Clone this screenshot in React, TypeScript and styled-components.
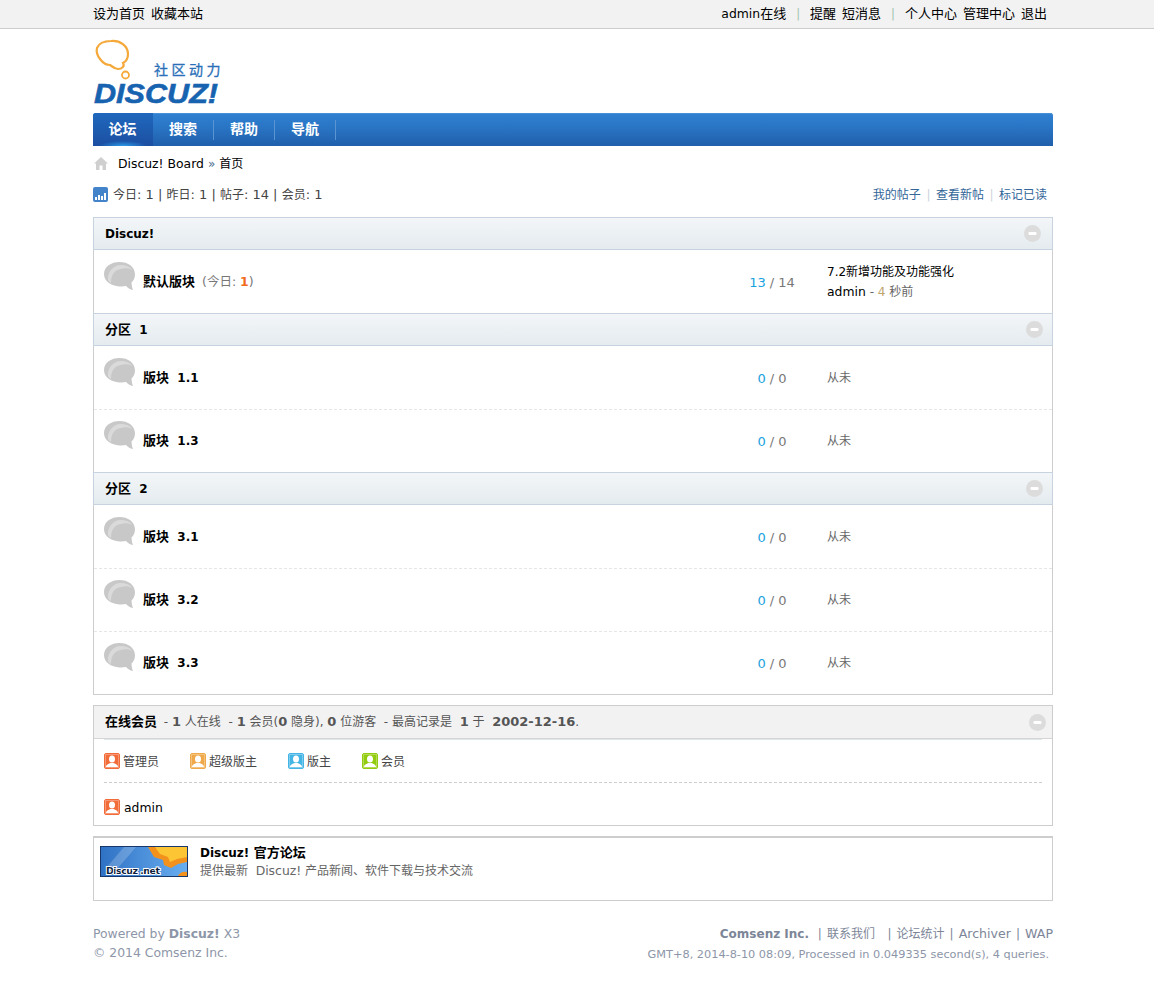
import styled, { createGlobalStyle } from 'styled-components';

const GlobalStyle = createGlobalStyle`
  html, body {
    margin: 0;
    padding: 0;
    background: #fff;
  }
  body {
    font: 12px/20px "DejaVu Sans", "Noto Sans CJK SC", sans-serif;
    color: #444;
  }
`;

// latin runs sit a bit larger than the cjk around them
const Lat = styled.span<{ $size?: number }>`
  font-size: ${(p) => p.$size ?? 12.4}px;
`;

const Container = styled.div`
  width: 960px;
  margin-left: 93px;
`;

const TopBar = styled.div`
  height: 28px;
  background: #f2f2f2;
  border-bottom: 1px solid #cdcdcd;
`;

const TopInner = styled(Container)`
  display: flex;
  justify-content: space-between;
  font-size: 13px;
  line-height: 28px;
  color: #000;
`;

const TopLinks = styled.div`
  display: flex;
  gap: 6px;
`;

const TopRight = styled(TopLinks)`
  padding-right: 6px;
`;

const Pipe = styled.span`
  color: #a9c9b5;
  margin: 0 3.75px;
`;

const LogoWrap = styled.div`
  height: 75px;
  padding-top: 9px;
  svg {
    display: block;
    overflow: visible;
  }
`;

const Nav = styled.div`
  display: flex;
  height: 33px;
  border-radius: 3px 3px 0 0;
  background: linear-gradient(#3080d2, #2a76c6 40%, #205fab);
  box-shadow: inset 0 1px 0 #4a90d8;
`;

const NavItem = styled.div<{ $active?: boolean }>`
  position: relative;
  box-sizing: border-box;
  width: 61px;
  padding-right: 1px;
  text-align: center;
  font-size: 14px;
  font-weight: bold;
  line-height: 33px;
  color: #fff;
  ${(p) =>
    p.$active
      ? `
    width: 60px;
    border-radius: 3px 0 0 0;
    background: radial-gradient(ellipse 24px 5px at 50% 100%, #2b9ae8, transparent), linear-gradient(#1f68bd, #1c4fa2);
  `
      : `
    &::after {
      content: '';
      position: absolute;
      right: 0;
      top: 7px;
      height: 20px;
      width: 1px;
      background: #5a94d2;
    }
  `}
`;

const Crumb = styled.div`
  display: flex;
  align-items: center;
  box-sizing: border-box;
  height: 34px;
  padding-top: 2px;
  color: #000;
  svg {
    margin: -2px 10px 0 1px;
  }
`;

const CrumbSep = styled.span`
  color: #4a6a8c;
  margin: 0 4px;
`;

const Stats = styled.div`
  display: flex;
  justify-content: space-between;
  align-items: center;
  height: 20px;
  margin: 4px 0 13px;
`;

const StatsLeft = styled.div`
  display: flex;
  align-items: center;
  gap: 5px;
`;

const StatsText = styled.span`
  padding-top: 2px;
`;

const StatsRight = styled.div`
  display: flex;
  padding: 2px 6px 0 0;
  color: #336699;
`;

const StatSep = styled.span`
  color: #cdd5dc;
  margin: 0 5.5px;
`;

const ForumBox = styled.div`
  border: 1px solid #cdcdcd;
  border-top: 0;
`;

const CatHeader = styled.div<{ $first?: boolean }>`
  display: flex;
  justify-content: space-between;
  align-items: center;
  box-sizing: border-box;
  height: 33px;
  margin: 0 -1px;
  padding: 0 ${(p) => (p.$first ? 11 : 9)}px 0 11px;
  border: 1px solid #c7d4df;
  background: linear-gradient(#f3f6f8, #e4ebef);
  font-size: 13px;
  font-weight: bold;
  color: #000;
`;

const ForumRow = styled.div<{ $first?: boolean }>`
  display: grid;
  grid-template-columns: 623px 110px 1fr;
  align-items: center;
  box-sizing: border-box;
  height: 63px;
  ${(p) => (p.$first ? '' : 'border-top: 1px dashed #e6e6e6; padding-bottom: 1px;')}
`;

const ForumTitle = styled.div`
  display: flex;
  align-items: center;
  padding-left: 10px;
  svg {
    margin: -4px 7px 4px 0;
  }
`;

const ForumName = styled.span`
  font-size: 13px;
  font-weight: bold;
  color: #000;
`;

const Today = styled.span`
  margin-left: 7px;
  font-size: 12.5px;
  color: #777;
  b {
    color: #f26c1d;
  }
`;

const Counts = styled.div`
  padding-top: 2px;
  text-align: center;
  font-size: 13px;
  color: #777;
  span {
    color: #19a2de;
  }
`;

const LastPost = styled.div`
  padding-top: 2px;
  color: #666;
  line-height: 19px;
`;

const LastTitle = styled.div`
  color: #000;
`;

const LastMeta = styled.div`
  color: #666;
  em {
    font-style: normal;
    color: #c0a46e;
  }
  span {
    color: #000;
  }
`;

const OnlineBox = styled.div`
  margin-top: 10px;
  border: 1px solid #cdcdcd;
`;

const OnlineHead = styled.div`
  display: flex;
  justify-content: space-between;
  align-items: center;
  height: 32px;
  padding: 0 6px 0 11px;
  background: #f2f2f2;
  border-bottom: 1px solid #d5d5d5;
  color: #555;
  b {
    font-size: 13px;
    color: #555;
  }
`;

const OnlineTitle = styled.b`
  && {
    color: #000;
  }
  margin-right: 3px;
`;

const Legend = styled.div`
  display: flex;
  align-items: center;
  box-sizing: border-box;
  height: 44px;
  margin: 0 10px;
  border-top: 1px solid #dde7ec;
  border-bottom: 1px dashed #cdcdcd;
`;

const LegendItem = styled.div<{ $gap: number }>`
  display: flex;
  align-items: center;
  gap: 3px;
  margin-right: ${(p) => p.$gap}px;
`;

const ItemLabel = styled.span`
  padding-top: 2px;
`;

const OnlineUsers = styled.div`
  display: flex;
  align-items: center;
  gap: 4px;
  box-sizing: border-box;
  height: 42px;
  margin: 0 10px;
  padding-top: 6px;
  color: #000;
`;

const LinkBox = styled.div`
  display: flex;
  box-sizing: border-box;
  height: 65px;
  margin-top: 10px;
  padding: 8px 6px;
  border: 1px solid #cdcdcd;
  border-top-width: 2px;
  svg {
    flex: none;
  }
`;

const LinkText = styled.div`
  margin: -2px 0 0 12px;
  line-height: 17px;
  color: #666;
`;

const LinkTitle = styled.div`
  font-size: 13px;
  font-weight: bold;
  color: #000;
`;

const Footer = styled.div`
  display: flex;
  justify-content: space-between;
  margin-top: 23px;
  font-size: 12.4px;
  color: #8d96a8;
  line-height: 19px;
`;

const FooterRight = styled.div`
  text-align: right;
`;

const FooterLinks = styled.div`
  font-size: 12px;
  color: #7d8698;
  b {
    color: #7d8698;
  }
`;

const FooterSep = styled.span`
  margin: 0 5px;
`;

const Perf = styled.div`
  margin-top: 1px;
  padding-right: 4px;
  font-size: 11.3px;
  color: #8d96a8;
`;

const Collapse = () => (
  <svg width="17" height="17" viewBox="0 0 17 17">
    <circle cx="8.5" cy="8.5" r="8.5" fill="#dcdcdc" />
    <rect x="4.5" y="7" width="8" height="3" rx="1" fill="#fff" />
  </svg>
);

const Bubble = () => (
  <svg width="32" height="32" viewBox="0 0 32 32">
    <path d="M15.5 0C24 0 31 4.800 31 12.500c0 4-2 6.500-3.500 8 .2 3 .5 5 1.500 7.500-3-.5-5.500-2.500-7-4-2 .5-4.500.5-6.500.4C7 24 0 19.500 0 12 0 4.800 7 0 15.500 0Z" fill="#c8c8c8" />
    <path d="M4 18C3 10 10 3 16 3c6 0 10 1.500 12 5-3-2-7-2-11-1C11 8 7 12 7 21 6 20.500 4.500 19.500 4 18Z" fill="#dadada" />
  </svg>
);

const UserIcon = ({ color }: { color: string }) => (
  <svg width="16" height="16" viewBox="0 0 16 16">
    <rect x="0.500" y="0.500" width="15" height="15" rx="1.500" fill={color} stroke={color} />
    <rect x="1.500" y="1.500" width="13" height="13" fill="none" stroke="#fff" strokeOpacity="0.3" />
    <ellipse cx="8" cy="6" rx="3" ry="3.500" fill="#fff" />
    <path d="M2 14c0-2.500 2.500-3 4.500-4h3c2 1 4.500 1.500 4.500 4Z" fill="#fff" />
  </svg>
);

const Logo = () => (
  <svg width="132" height="68" viewBox="0 0 132 68">
    <path
      d="M18 3C27 2 35 8 35 16c0 5-3 8-5 9 2 3-1 6-5 6-3 0-5-2-8-4-4 0-7-2-10-6C4 17 3 14 4 10 6 5 12 3 18 3Z"
      fill="none"
      stroke="#f5a93a"
      strokeWidth="2.200"
    />
    <circle cx="32.500" cy="37" r="3.500" fill="none" stroke="#f5a93a" strokeWidth="1.800" />
    <text x="61" y="37" fontSize="14" letterSpacing="3.500" fill="#2a70b8" stroke="#2a70b8" strokeWidth="0.300" fontFamily="Noto Sans CJK SC, sans-serif">
      社区动力
    </text>
    <text
      x="1"
      y="65"
      fontSize="28"
      fontWeight="bold"
      fontStyle="italic"
      fill="#1763b0"
      stroke="#1763b0"
      strokeWidth="0.600"
      fontFamily="Liberation Sans, sans-serif"
      textLength="124"
      lengthAdjust="spacingAndGlyphs"
    >
      DISCUZ!
    </text>
  </svg>
);

const HomeIcon = () => (
  <svg width="14" height="13" viewBox="0 0 14 13">
    <path d="M7 0 14 6.500H12V13H8.500V8.500H5.500V13H2V6.500H0Z" fill="#cfcfcf" />
  </svg>
);

const ChartIcon = () => (
  <svg width="15" height="15" viewBox="0 0 15 15">
    <rect width="15" height="15" rx="2" fill="#4283ca" />
    <rect x="2" y="10" width="2" height="3" fill="#fff" />
    <rect x="5" y="8" width="2" height="5" fill="#fff" />
    <rect x="8" y="9" width="2" height="4" fill="#fff" />
    <rect x="11" y="6" width="2" height="7" fill="#fff" />
  </svg>
);

const Banner = () => (
  <svg width="88" height="31" viewBox="0 0 88 31">
    <defs>
      <linearGradient id="bannerBg" x1="0" y1="0" x2="1" y2="0">
        <stop offset="0" stopColor="#2f71c4" />
        <stop offset="1" stopColor="#69aef0" />
      </linearGradient>
    </defs>
    <rect x="0.500" y="0.500" width="87" height="30" fill="url(#bannerBg)" stroke="#17376a" />
    <path d="M6 22 24 1H36L18 22Z" fill="#fff" opacity="0.200" />
    <path d="M48 1 54 11 63 14 64 19 71 22 78 18 87 16V1Z" fill="#f2921c" />
    <path d="M55 1 60 8 68 11 70 16 77 13 87 11V1Z" fill="#fcc534" />
    <path d="M78 30C79 27 83 25 87 26V30Z" fill="#f2921c" />
    <text x="6" y="28" fontSize="9.500" fontWeight="bold" fill="#0c1c3a" stroke="#fff" strokeWidth="2" paintOrder="stroke" fontFamily="DejaVu Sans, sans-serif" textLength="54">
      Discuz .net
    </text>
  </svg>
);

const forumGroups = [
  { name: 'Discuz!', rows: [{ name: '默认版块', num: '', today: 1, threads: 13, posts: 14 }] },
  {
    name: '分区',
    num: '1',
    rows: [
      { name: '版块', num: '1.1', threads: 0, posts: 0 },
      { name: '版块', num: '1.3', threads: 0, posts: 0 },
    ],
  },
  {
    name: '分区',
    num: '2',
    rows: [
      { name: '版块', num: '3.1', threads: 0, posts: 0 },
      { name: '版块', num: '3.2', threads: 0, posts: 0 },
      { name: '版块', num: '3.3', threads: 0, posts: 0 },
    ],
  },
];

const legend = [
  { label: '管理员', color: '#f26c3a', gap: 31 },
  { label: '超级版主', color: '#f0a94a', gap: 31 },
  { label: '版主', color: '#45b5e6', gap: 31 },
  { label: '会员', color: '#93cc0e', gap: 0 },
];

export default function App() {
  return (
    <>
      <GlobalStyle />
      <TopBar>
        <TopInner>
          <TopLinks>
            <span>设为首页</span>
            <span>收藏本站</span>
          </TopLinks>
          <TopRight>
            <span>
              <Lat>admin</Lat>在线
            </span>
            <Pipe>|</Pipe>
            <span>提醒</span>
            <span>短消息</span>
            <Pipe>|</Pipe>
            <span>个人中心</span>
            <span>管理中心</span>
            <span>退出</span>
          </TopRight>
        </TopInner>
      </TopBar>
      <Container>
        <LogoWrap>
          <Logo />
        </LogoWrap>
        <Nav>
          <NavItem $active>论坛</NavItem>
          <NavItem>搜索</NavItem>
          <NavItem>帮助</NavItem>
          <NavItem>导航</NavItem>
        </Nav>
        <Crumb>
          <HomeIcon />
          <Lat>Discuz! Board</Lat> <CrumbSep>»</CrumbSep> 首页
        </Crumb>
        <Stats>
          <StatsLeft>
            <ChartIcon />
            <StatsText>
              今日<Lat $size={13}>: 1 | </Lat>昨日<Lat $size={13}>: 1 | </Lat>帖子<Lat $size={13}>: 14 | </Lat>会员<Lat $size={13}>: 1</Lat>
            </StatsText>
          </StatsLeft>
          <StatsRight>
            我的帖子<StatSep>|</StatSep>查看新帖<StatSep>|</StatSep>标记已读
          </StatsRight>
        </Stats>
        <ForumBox>
          {forumGroups.map((group, g) => (
            <div key={g}>
              <CatHeader $first={g === 0}>
                <span>
                  {g === 0 ? <Lat $size={12}>{group.name}</Lat> : group.name}
                  {group.num && <Lat $size={12}>{'\u00a0\u00a0' + group.num}</Lat>}
                </span>
                <Collapse />
              </CatHeader>
              {group.rows.map((row, r) => (
                <ForumRow key={row.num + r} $first={r === 0}>
                  <ForumTitle>
                    <Bubble />
                    <ForumName>
                      {row.name}
                      {row.num && <Lat $size={12}>{'\u00a0\u00a0' + row.num}</Lat>}
                    </ForumName>
                    {row.today && (
                      <Today>
                        (今日: <b>{row.today}</b>)
                      </Today>
                    )}
                  </ForumTitle>
                  <Counts>
                    <span>{row.threads}</span> / {row.posts}
                  </Counts>
                  {row.today ? (
                    <LastPost>
                      <LastTitle>7.2新增功能及功能强化</LastTitle>
                      <LastMeta>
                        <Lat>admin</Lat> - <em>4</em> 秒前
                      </LastMeta>
                    </LastPost>
                  ) : (
                    <LastPost>从未</LastPost>
                  )}
                </ForumRow>
              ))}
            </div>
          ))}
        </ForumBox>
        <OnlineBox>
          <OnlineHead>
            <span>
              <OnlineTitle>在线会员</OnlineTitle> - <b>1</b> 人在线 &nbsp;- <b>1</b> 会员(<b>0</b> 隐身), <b>0</b> 位游客 &nbsp;- 最高记录是 &nbsp;<b>1</b> 于 &nbsp;<b>2002-12-16</b>.
            </span>
            <Collapse />
          </OnlineHead>
          <Legend>
            {legend.map((item) => (
              <LegendItem key={item.label} $gap={item.gap}>
                <UserIcon color={item.color} />
                <ItemLabel>{item.label}</ItemLabel>
              </LegendItem>
            ))}
          </Legend>
          <OnlineUsers>
            <UserIcon color="#f26c3a" />
            <ItemLabel>
              <Lat>admin</Lat>
            </ItemLabel>
          </OnlineUsers>
        </OnlineBox>
        <LinkBox>
          <Banner />
          <LinkText>
            <LinkTitle>
              <Lat $size={12}>Discuz!</Lat> 官方论坛
            </LinkTitle>
            提供最新 &nbsp;<Lat>Discuz!</Lat> 产品新闻、软件下载与技术交流
          </LinkText>
        </LinkBox>
        <Footer>
          <div>
            Powered by <b>Discuz!</b> X3
            <br />© 2014 Comsenz Inc.
          </div>
          <FooterRight>
            <FooterLinks>
              <b>Comsenz Inc.</b>
              <FooterSep>&nbsp;|</FooterSep>联系我们
              <FooterSep>&nbsp;&nbsp;|</FooterSep>论坛统计
              <FooterSep>|</FooterSep>
              <Lat $size={12.6}>Archiver</Lat>
              <FooterSep>|</FooterSep>
              <Lat $size={12.6}>WAP</Lat>
            </FooterLinks>
            <Perf>GMT+8, 2014-8-10 08:09, Processed in 0.049335 second(s), 4 queries.</Perf>
          </FooterRight>
        </Footer>
      </Container>
    </>
  );
}
